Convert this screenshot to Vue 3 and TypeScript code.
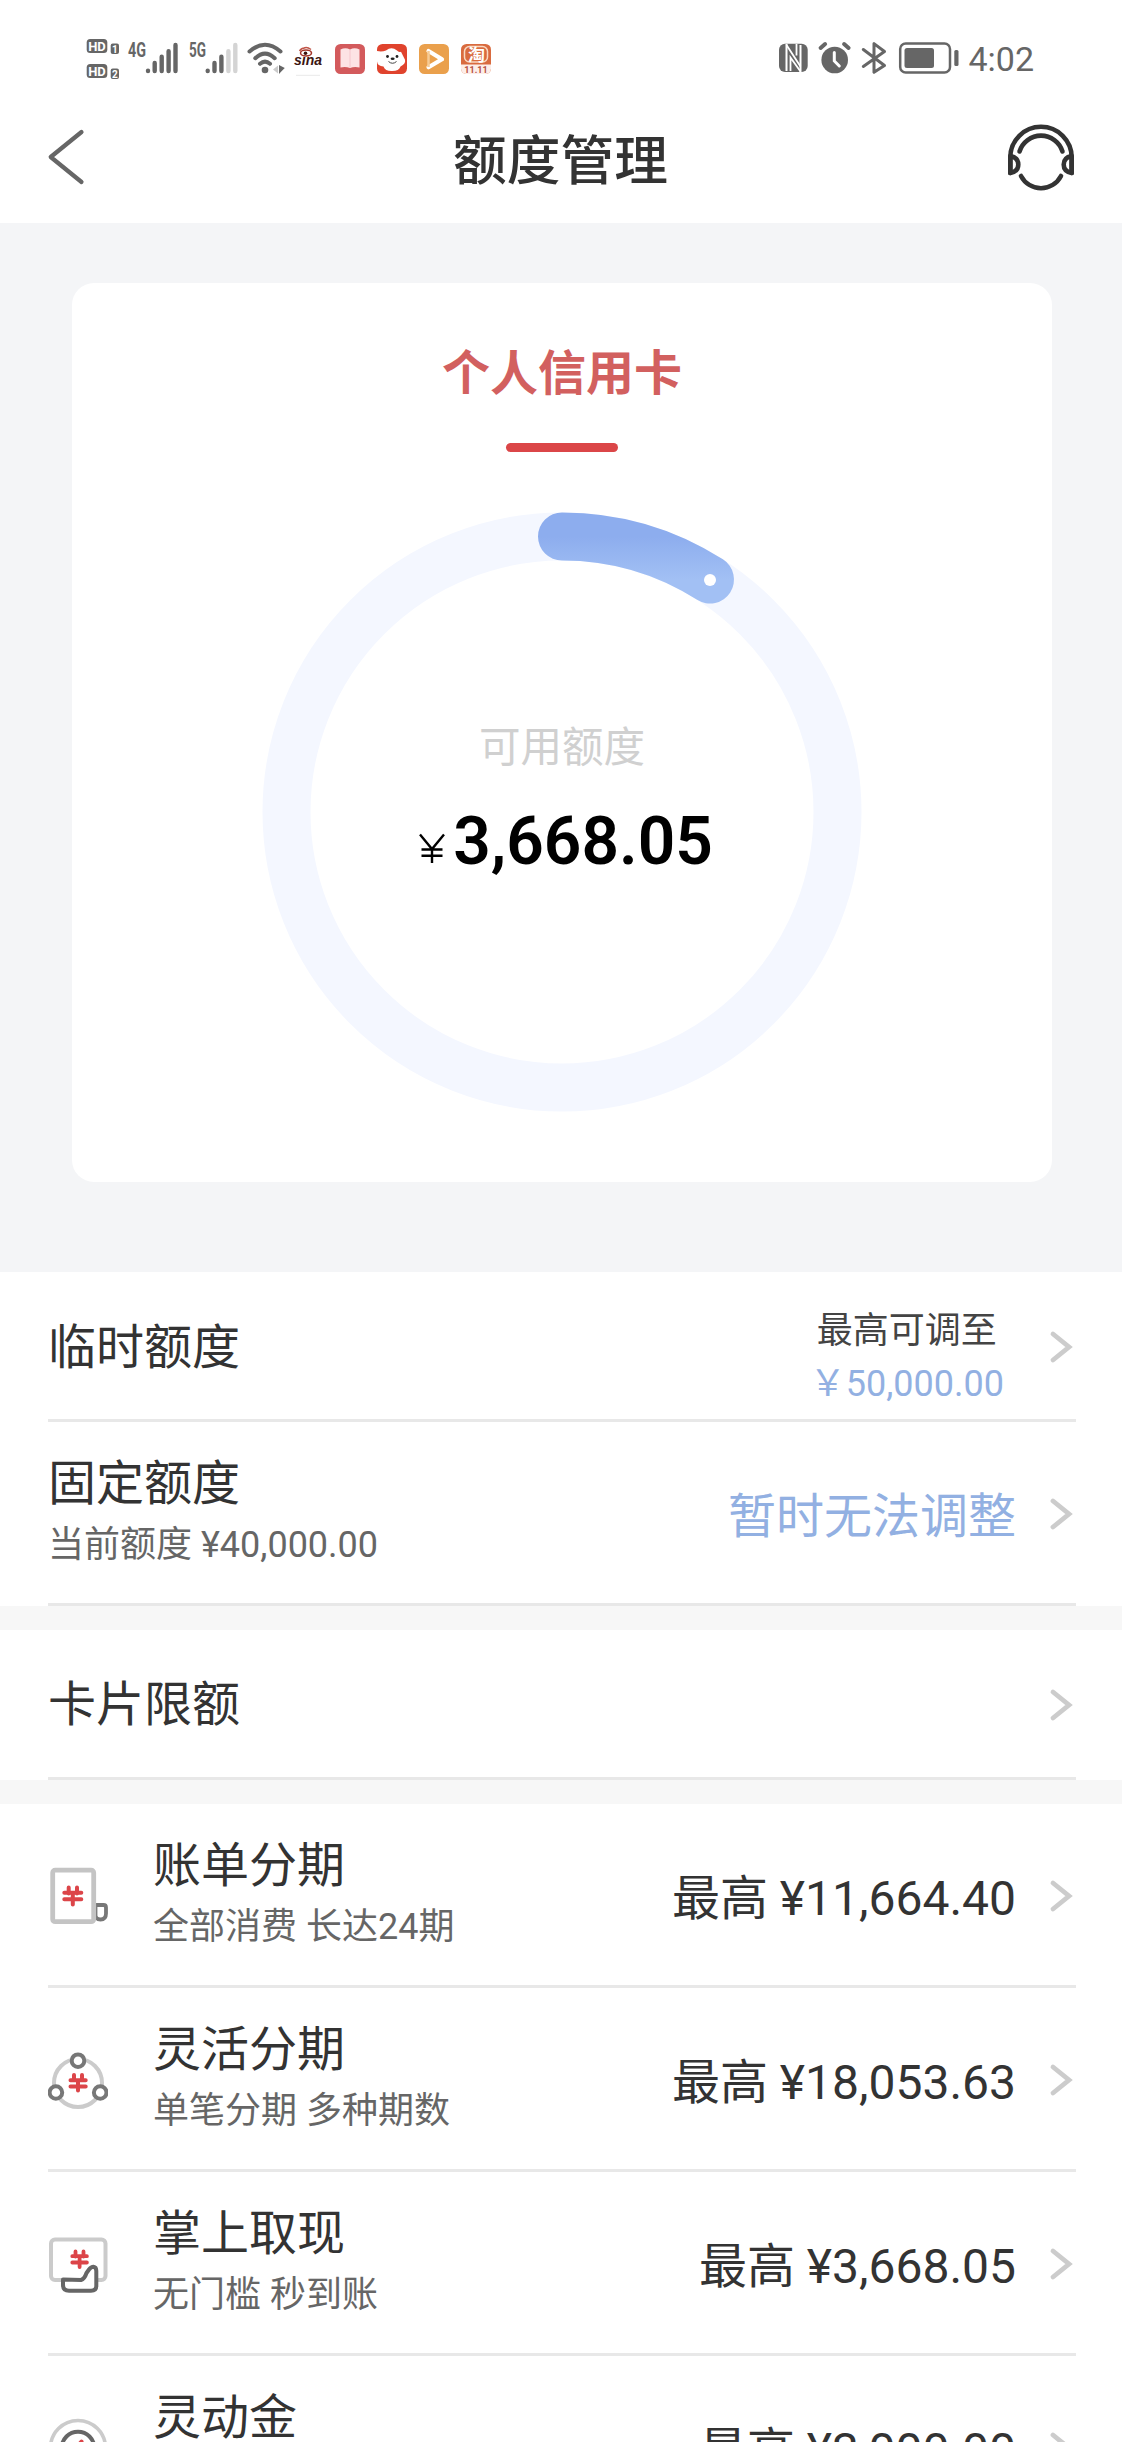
<script setup lang="ts">
interface Product {
  icon: 'bill' | 'flex' | 'palm' | 'gold'
  title: string
  note: string
  amount: string
}

const products: Product[] = [
  { icon: 'bill', title: '账单分期', note: '全部消费 长达24期', amount: '¥11,664.40' },
  { icon: 'flex', title: '灵活分期', note: '单笔分期 多种期数', amount: '¥18,053.63' },
  { icon: 'palm', title: '掌上取现', note: '无门槛 秒到账', amount: '¥3,668.05' },
  { icon: 'gold', title: '灵动金', note: '', amount: '¥3,000.00' },
]
</script>

<template>
  <div class="screen">
    <header class="status">
      <svg class="status-left" width="440" height="80" viewBox="0 0 440 80">
        <g fill="#666">
          <rect x="16.7" y="19" width="20.6" height="14" rx="3.5" />
          <rect x="16.7" y="44" width="20.6" height="14" rx="3.5" />
          <rect x="40.7" y="23.5" width="8.3" height="10.5" rx="2" />
          <rect x="40.7" y="48.5" width="8.3" height="10.5" rx="2" />
        </g>
        <g class="tiny" fill="#fff" text-anchor="middle">
          <text x="27" y="30.6" font-size="13">HD</text>
          <text x="27" y="55.6" font-size="13">HD</text>
          <text x="44.9" y="32.6" font-size="10">1</text>
          <text x="44.9" y="57.6" font-size="10">2</text>
        </g>
        <g class="tiny" fill="#666">
          <text x="58" y="36.6" font-size="19.5" textLength="18" lengthAdjust="spacingAndGlyphs">4G</text>
          <text x="119" y="36.6" font-size="19.5" textLength="17" lengthAdjust="spacingAndGlyphs">5G</text>
        </g>
        <g stroke="#666" stroke-width="4.4" stroke-linecap="round">
          <path d="M78 50.7v.4M84.7 43v8M91.7 36.7v14.3M98.6 31.2v19.8M105.5 25v26" />
          <path d="M137.7 50.7v.4M144.5 43v8M151.4 36.7v14.3" />
          <path d="M158.4 31.2v19.8M165.3 25v26" stroke="#d4d4d4" />
        </g>
        <path d="M179.500 31.500Q195 18 210.500 31.500M185.300 38.200Q195 29 204.700 38.200M190 43.800Q195 39.500 200 43.800" fill="none" stroke="#666" stroke-width="4" stroke-linecap="round" />
        <circle cx="195" cy="50" r="3.3" fill="#666" />
        <path d="M208 45.500l-5 4 5 4z" fill="#ccc" />
        <path d="M209 45v9l2.300-2.500 3.500-3.500z" fill="#666" />
        <text class="sina" x="224" y="45" font-size="14" textLength="28" lengthAdjust="spacingAndGlyphs">sina</text>
        <ellipse cx="236" cy="33" rx="5.500" ry="3" fill="#fff" stroke="#a33529" stroke-width="1.600" />
        <circle cx="235.500" cy="33.300" r="1.800" fill="#3b120d" />
        <path d="M229.500 31q2-3 5-3M234 28q3-1.500 7 1.500" fill="none" stroke="#c05548" stroke-width="1.500" />
        <path d="M226 55.300h24" stroke="#e9e9e9" />

        <rect x="265" y="24" width="30" height="30" rx="5.500" fill="#d35a5c" />
        <path d="M270.500 29.500q5-2.300 9.500 0q4.500-2.300 9.500 0v18q-5-1.500-9.500.6q-4.500-2.100-9.500-.6z" fill="#fde3e4" />
        <path d="M280 30v17.500" stroke="#f5c6cc" />

        <rect x="307" y="24" width="30" height="30" rx="5.500" fill="#e0432d" />
        <path d="M307 31q5 1 9-.5q5.500-4.500 11 0q1.500 2 4 1.200l4 8q1 4-4.500 6.800q-1.500 4.700-9 4.500q-6.500 0-8-4.500q-6-.5-6.500-5z" fill="#fff" />
        <circle cx="317.500" cy="36.500" r="1.400" fill="#222" />
        <circle cx="327" cy="36.500" r="1.400" fill="#222" />
        <ellipse cx="322.600" cy="38.800" rx="2" ry="1.200" fill="#222" />
        <path d="M318.500 41.500q4 3.500 8 0" fill="none" stroke="#444" stroke-width="1" />

        <rect x="349" y="24" width="30" height="30" rx="5.500" fill="#eaa04c" />
        <path d="M358.500 31l13.500 8.300-13.500 8" fill="none" stroke="#fff" stroke-width="4.200" stroke-linecap="round" stroke-linejoin="round" />
        <path d="M358.500 31v16" stroke="#f6cb95" stroke-width="2.500" />

        <rect x="391" y="24" width="30" height="30" rx="5.500" fill="#d96b3f" />
        <path d="M391 44.500h30v4a5.500 5.500 0 0 1-5.500 5.500h-19a5.500 5.500 0 0 1-5.500-5.500z" fill="#fdeee9" />
        <rect x="394.500" y="26.500" width="23" height="15.500" rx="5" fill="none" stroke="#f9d9c2" stroke-width="1.500" />
        <g text-anchor="middle">
          <text class="tao" x="406.500" y="40.500" font-size="17">淘</text>
          <text class="tiny" x="406" y="53" font-size="9" fill="#b5503f">11.11</text>
        </g>
      </svg>

      <svg class="status-right" width="300" height="80" viewBox="0 0 300 80">
        <rect x="19" y="23.700" width="28.700" height="28.300" rx="6" fill="#666" />
        <path d="M26.500 24v27M40.500 25v27" fill="none" stroke="#fff" stroke-width="2" />
        <path d="M26.500 25l14 21.500M30.500 51V37.500l10 14M36.500 24v11.500" fill="none" stroke="#fff" stroke-width="1.800" />
        <circle cx="74.700" cy="40" r="13.300" fill="#666" />
        <path d="M74.300 32.500v8.500l5 5" fill="none" stroke="#fff" stroke-width="3" stroke-linecap="round" />
        <path d="M60.600 28l4.500-4M88.600 28l-4.500-4" stroke="#666" stroke-width="4" stroke-linecap="round" />
        <path d="M103.300 29.500L124.500 45.500L114 52.300V23.600L124.500 31.500L103.300 46.500" fill="none" stroke="#666" stroke-width="3" stroke-linecap="round" stroke-linejoin="round" />
        <rect x="140.200" y="23.400" width="49.800" height="29" rx="5.500" fill="none" stroke="#666" stroke-width="2.500" />
        <rect x="144.500" y="28" width="29.500" height="20" rx="2.500" fill="#666" />
        <rect x="194.300" y="30" width="4.200" height="16" rx="1.500" fill="#666" />
        <text class="clock" x="208.500" y="51" font-size="34">4:02</text>
      </svg>
    </header>

    <nav class="nav">
      <svg class="back" width="40" height="60" viewBox="0 0 40 60">
        <path d="M35.500 5L4.700 30L35.500 55" fill="none" stroke="#666" stroke-width="4.200" stroke-linecap="round" stroke-linejoin="round" />
      </svg>
      <h1>额度管理</h1>
      <svg class="headset" width="70" height="70" viewBox="0 0 70 70">
        <g fill="none" stroke="#333" stroke-width="4.600" stroke-linecap="round" stroke-linejoin="round">
          <path d="M4.300 51V35.500a30.700 30.700 0 0 1 61.400 0V51" />
          <path d="M13.500 29.500a22.500 22.500 0 0 1 43 0" />
          <path d="M4.300 34q8 1.500 8 8.500t-8 8.500z" />
          <path d="M65.700 34q-8 1.500-8 8.500t8 8.500z" />
          <path d="M15 54a22.500 22.500 0 0 0 40 0" />
        </g>
      </svg>
    </nav>

    <section class="hero">
      <div class="card">
        <h2>个人信用卡</h2>
        <i class="underline"></i>
        <div class="gauge">
          <svg width="600" height="600" viewBox="0 0 600 600">
            <defs>
              <linearGradient id="arc" x1="0" y1="0" x2="0" y2="1">
                <stop offset="0" stop-color="#8dadee" />
                <stop offset="1" stop-color="#a2c0f4" />
              </linearGradient>
            </defs>
            <circle cx="300" cy="300" r="275.500" fill="none" stroke="#f4f7ff" stroke-width="48" />
            <path d="M300 24.500A275.500 275.500 0 0 1 448 67.600" fill="none" stroke="url(#arc)" stroke-width="48" stroke-linecap="round" />
            <circle cx="448" cy="68" r="6" fill="#fff" />
          </svg>
          <div class="reading">
            <p class="caption">可用额度</p>
            <p class="total"><svg width="26" height="32" viewBox="0 0 26 32"><path d="M1 2.500L13 17L25 2.500M13 17V31M2.500 17.500h21M2.500 23.700h21" fill="none" stroke="#000" stroke-width="2.400" /></svg><b>3,668.05</b></p>
          </div>
        </div>
      </div>
    </section>

    <section class="group">
      <div class="row temp">
        <div class="label"><p class="title">临时额度</p></div>
        <div class="limit">
          <p class="limit-top">最高可调至</p>
          <p class="limit-sum"><span>￥</span>50,000.00</p>
        </div>
        <svg class="chev" width="24" height="34" viewBox="0 0 24 34"><path d="M4 4L20 17L4 30" /></svg>
      </div>
      <div class="row fixed">
        <div class="label">
          <p class="title">固定额度</p>
          <p class="note">当前额度 ¥40,000.00</p>
        </div>
        <p class="value blue">暂时无法调整</p>
        <svg class="chev" width="24" height="34" viewBox="0 0 24 34"><path d="M4 4L20 17L4 30" /></svg>
      </div>
    </section>

    <section class="group">
      <div class="row card-limit">
        <div class="label"><p class="title">卡片限额</p></div>
        <svg class="chev" width="24" height="34" viewBox="0 0 24 34"><path d="M4 4L20 17L4 30" /></svg>
      </div>
    </section>

    <section class="group">
      <div v-for="p in products" :key="p.title" class="row product">
        <svg class="icon" width="60" height="60" viewBox="0 0 60 60" fill="none" stroke-linecap="round" stroke-linejoin="round">
          <template v-if="p.icon === 'bill'">
            <path d="M46 39h9.500q2.500 0 2.500 2.500v6q0 6-5.500 6t-5-6V40" stroke="#777" stroke-width="3.800" />
            <rect x="4.700" y="4.200" width="41" height="51.500" rx="2.500" fill="#fff" stroke="#c4c4c4" stroke-width="4.800" />
            <path d="M20.700 21.500v6M29 21.500v6M16.300 26.700h17M16.300 33.300h17M24.800 27v11.500" stroke="#dc4549" stroke-width="4" />
          </template>
          <template v-else-if="p.icon === 'flex'">
            <circle cx="30" cy="33" r="24" stroke="#cbcbcb" stroke-width="4" />
            <g fill="#fff" stroke="#777" stroke-width="4">
              <circle cx="30" cy="10.700" r="6.300" /><circle cx="7.900" cy="42.500" r="6.300" /><circle cx="52.200" cy="42.500" r="6.300" />
            </g>
            <path d="M26 25v5M34 25v5M22.500 30.300h15.200M22.500 36.500h15.200M30 30.500v10" stroke="#dc4549" stroke-width="4" />
          </template>
          <template v-else-if="p.icon === 'palm'">
            <rect x="3" y="5.500" width="54.500" height="40.500" rx="4" stroke="#cbcbcb" stroke-width="4" />
            <path d="M27.500 17.500v5M35.500 17.500v5M24.300 22.200h14.600M24.300 28.500h14.600M31.600 23v10" stroke="#dc4549" stroke-width="3.800" />
            <path d="M15 45.500L33 46Q36.500 45 38.500 39L41 35.500Q43 32.800 45.500 32.800Q48.300 33.200 48.300 37V52Q48.300 56.800 43 56.800H21Q15 56.800 15 51z" fill="#fff" stroke="#666" stroke-width="4" />
          </template>
          <template v-else>
            <circle cx="30" cy="30" r="27.500" stroke="#cbcbcb" stroke-width="3.600" />
            <circle cx="30" cy="30" r="16.300" stroke="#666" stroke-width="4" />
            <path d="M33.500 23.500l-6 7h7l-6 8" stroke="#dc4549" stroke-width="4" />
          </template>
        </svg>
        <div class="label">
          <p class="title">{{ p.title }}</p>
          <p class="note">{{ p.note }}</p>
        </div>
        <p class="value">最高 {{ p.amount }}</p>
        <svg class="chev" width="24" height="34" viewBox="0 0 24 34"><path d="M4 4L20 17L4 30" /></svg>
      </div>
    </section>
  </div>
</template>

<style>
html,
body {
  margin: 0;
  background: #fff;
  overflow: hidden;
}
</style>

<style scoped>
.screen {
  width: 1122px;
  height: 2442px;
  overflow: hidden;
  background: #f7f7f7;
  color: #333;
  font-family: Roboto, 'Noto Sans CJK SC', sans-serif;
}
p,
h1,
h2 {
  margin: 0;
  white-space: nowrap;
}
svg {
  display: block;
  flex: none;
}
.status {
  display: flex;
  justify-content: space-between;
  height: 80px;
  padding: 20px 62px 0 70px;
  background: #fff;
}
.tiny {
  font-family: Roboto, sans-serif;
  font-weight: 700;
}
.sina {
  font-family: 'Liberation Sans', sans-serif;
  font-weight: 700;
  font-style: italic;
  fill: #3b1512;
}
.tao {
  font-family: 'Noto Sans CJK SC', sans-serif;
  font-weight: 700;
  fill: #fff;
}
.clock {
  font-family: Roboto, sans-serif;
  fill: #666;
}
.nav {
  display: flex;
  justify-content: space-between;
  align-items: center;
  height: 123px;
  padding: 0 46px;
  background: #fff;
}
.nav h1 {
  font-size: 53.7px;
  font-weight: 500;
  line-height: 80px;
  padding-left: 29px;
}
.back {
  margin-bottom: 9px;
}
.headset {
  margin-bottom: 10px;
}
.hero {
  height: 989px;
  padding: 60px 70px 0 72px;
  background: #f4f5f7;
}
.card {
  display: flex;
  flex-direction: column;
  align-items: center;
  height: 899px;
  border-radius: 22px;
  background: #fff;
}
.card h2 {
  margin-top: 55px;
  font-size: 48px;
  font-weight: 700;
  line-height: 72px;
  color: #d2605f;
}
.underline {
  width: 112px;
  height: 9px;
  margin-top: 33px;
  border-radius: 5px;
  background: #db4648;
}
.gauge {
  display: grid;
  margin-top: 60px;
}
.gauge > * {
  grid-area: 1 / 1;
}
.reading {
  display: flex;
  flex-direction: column;
  align-items: center;
  padding-top: 206px;
}
.caption {
  font-size: 41.5px;
  font-weight: 400;
  line-height: 60px;
  color: #d0d0d0;
}
.total {
  display: flex;
  align-items: baseline;
  gap: 8px;
  margin-top: 24px;
  padding-left: 8px;
  line-height: 80px;
  color: #000;
}
.total b {
  font-size: 65.8px;
  font-weight: 600;
}
.group {
  margin-bottom: 24px;
  background: #fff;
}
.row {
  display: flex;
  align-items: center;
  box-sizing: border-box;
  margin: 0 46px 0 48px;
  padding-top: 3px;
  border-bottom: 3px solid #e8e8e8;
}
.temp {
  height: 150px;
}
.fixed {
  height: 184px;
}
.card-limit {
  height: 150px;
}
.product {
  height: 184px;
}
.label {
  flex: 1;
}
.title {
  font-size: 48px;
  line-height: 62px;
}
.temp .title {
  padding-top: 2px;
}
.note {
  font-size: 36px;
  line-height: 60px;
  height: 60px;
  color: #666;
}
.icon {
  margin-right: 45px;
}
.value {
  padding-top: 6px;
  font-size: 48px;
  line-height: 62px;
}
.blue,
.limit-sum {
  color: #92b0e2;
}
.limit {
  padding-top: 20px;
  margin-right: 12px;
}
.limit-top {
  padding-left: 7px;
  font-size: 36px;
  line-height: 54px;
  color: #444;
}
.limit-sum {
  font-size: 36px;
  line-height: 52px;
}
.limit-sum span {
  display: inline-block;
  width: 36px;
}
.chev {
  margin: 0 3px 0 33px;
  fill: none;
  stroke: #ccc;
  stroke-width: 4.8;
  stroke-linecap: round;
}
</style>
